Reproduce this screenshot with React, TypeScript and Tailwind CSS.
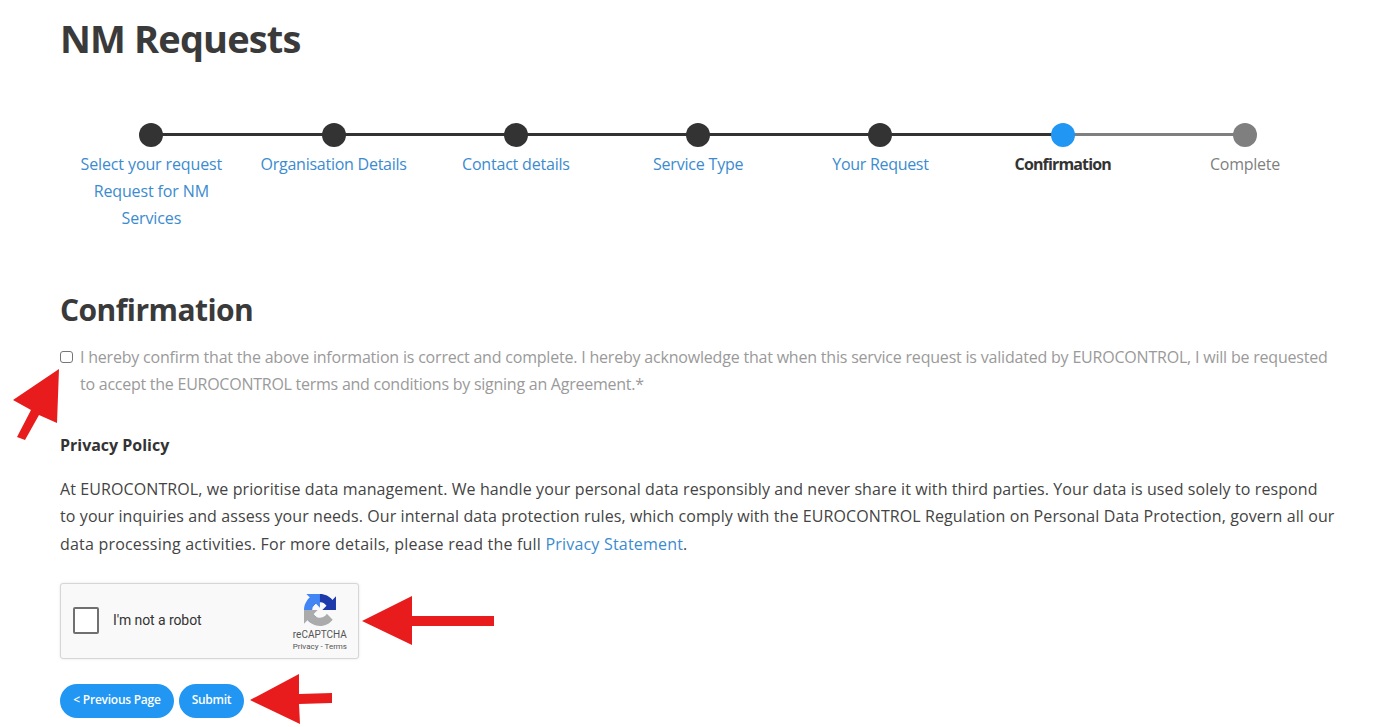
const steps = [
  { lines: ["Select your request", "Request for NM", "Services"], dot: "bg-[#333333]", line: "bg-[#333333]", text: "text-[#3b8bd0] tracking-[-0.12px]" },
  { lines: ["Organisation Details"], dot: "bg-[#333333]", line: "bg-[#333333]", text: "text-[#3b8bd0] tracking-[-0.25px]" },
  { lines: ["Contact details"], dot: "bg-[#333333]", line: "bg-[#333333]", text: "text-[#3b8bd0] tracking-[-0.2px]" },
  { lines: ["Service Type"], dot: "bg-[#333333]", line: "bg-[#333333]", text: "text-[#3b8bd0] tracking-[-0.2px]" },
  { lines: ["Your Request"], dot: "bg-[#333333]", line: "bg-[#333333]", text: "text-[#3b8bd0] tracking-[-0.3px]" },
  { lines: ["Confirmation"], dot: "bg-[#2196f3]", line: "bg-[#7f7f7f]", text: "text-[#333333] font-bold tracking-[-0.85px]" },
  { lines: ["Complete"], dot: "bg-[#7f7f7f]", line: "", text: "text-[#7f7f7f] tracking-[-0.25px]" },
];

function Arrows() {
  return (
    <svg className="absolute left-0 top-0 pointer-events-none" width="520" height="727" fill="#e81c1c">
      <polygon points="59,369 13,400 31,410 17,437 25,440 39,415 57,423" />
      <polygon points="362,621 412,596 412,616 494,616 494,626 412,626 412,645" />
      <polygon points="250,700 299,674 299,694 332,693 332,703 299,704 300,724" />
    </svg>
  );
}

function RecaptchaLogo() {
  const d = "M64 31.955l-.033-1.37V4.687l-7.16 7.16C50.948 4.674 42.033.093 32.05.093c-10.4 0-19.622 4.957-25.446 12.637l11.736 11.86a15.55 15.55 0 0 1 4.747-5.33c2.05-1.598 4.952-2.906 8.963-2.906.484 0 .858.057 1.133.163 4.968.392 9.275 3.134 11.812 7.112l-8.306 8.306c10.523-.04 22.4-.066 27.859.027";
  return (
    <svg width="32" height="32" viewBox="0 0 64 64">
      <path d={d} fill="#1c3aa9" />
      <path d={d} fill="#4285f4" transform="rotate(-90 32 32)" />
      <path d={d} fill="#ababab" transform="rotate(180 32 32)" />
    </svg>
  );
}

export default function App() {
  return (
    <div className="relative h-[727px] w-[1373px] overflow-hidden bg-white font-['Open_Sans',sans-serif] text-[#333333]">
      <div className="pl-[60px] pr-[36.8px]">
        <h1 className="pt-[12px] text-[38px] font-bold leading-[52px] tracking-[-0.85px] text-[#3a3a3a]">NM Requests</h1>

        <div className="ml-[0.2px] mt-[59px] flex">
          {steps.map((s) => (
            <div key={s.lines[0]} className="relative flex-1 text-center">
              {s.line && <div className={`absolute left-1/2 top-[10px] h-[3px] w-full ${s.line}`} />}
              <div className={`relative mx-auto h-6 w-6 rounded-full ${s.dot}`} />
              <div className={`mt-[4px] text-[16px] leading-[27px] ${s.text}`}>
                {s.lines.map((l) => <div key={l}>{l}</div>)}
              </div>
            </div>
          ))}
        </div>

        <h2 className="mt-[57px] text-[30px] font-bold leading-[42px] tracking-[-0.55px] text-[#3a3a3a]">Confirmation</h2>

        <div className="mt-[13px] flex items-start text-[16px] leading-[27px] text-[#9a9a9a]">
          <span className="mr-[7px] mt-[7px] h-[12px] w-[13px] shrink-0 rounded-[3px] border border-[#767676] bg-white" />
          <p className="w-[1256px]">
            <span className="block tracking-[-0.2px]">I hereby confirm that the above information is correct and complete. I hereby acknowledge that when this service request is validated by EUROCONTROL, I will be requested</span>
            <span className="block tracking-[-0.25px]">to accept the EUROCONTROL terms and conditions by signing an Agreement.*</span>
          </p>
        </div>

        <p className="mt-[34px] text-[16px] font-bold leading-[27px] tracking-[-0.02px] text-[#333333]">Privacy Policy</p>

        <p className="mt-[17px] w-[1290px] text-[16px] leading-[27.3px] text-[#444444]">
          <span className="block tracking-[0.1px]">At EUROCONTROL, we prioritise data management. We handle your personal data responsibly and never share it with third parties. Your data is used solely to respond</span>
          <span className="block tracking-[0.095px]">to your inquiries and assess your needs. Our internal data protection rules, which comply with the EUROCONTROL Regulation on Personal Data Protection, govern all our</span>
          <span className="block tracking-[0.2px]">data processing activities. For more details, please read the full <span className="text-[#3b8bd0]">Privacy Statement</span>.</span>
        </p>

        <div className="mt-[25px] flex h-[76px] w-[299px] items-center rounded-[3px] border border-[#d6d6d6] bg-[#f9f9f9] pl-[12px] pr-[11px] shadow-[0_0_3px_rgba(0,0,0,0.1)] font-['Roboto',sans-serif]">
          <span className="h-[27px] w-[26px] rounded-[2px] border-2 border-[#707070] bg-white" />
          <span className="ml-[14px] text-[14px] tracking-[-0.08px] text-[#333333]">I'm not a robot</span>
          <div className="ml-auto flex flex-col items-center pt-[5px]">
            <RecaptchaLogo />
            <span className="mt-[2px] text-[10px] leading-[13px] text-[#555555]">reCAPTCHA</span>
            <span className="text-[8px] leading-[11px] text-[#555555]">Privacy - Terms</span>
          </div>
        </div>

        <div className="mt-[25px] flex gap-[5px]">
          <button className="h-[34px] w-[114px] rounded-full bg-[#2196f3] pb-[2px] text-[12px] font-semibold tracking-[-0.25px] text-white">&lt; Previous Page</button>
          <button className="h-[34px] w-[65px] rounded-full bg-[#2196f3] pb-[2px] text-[12px] font-semibold tracking-[-0.25px] text-white">Submit</button>
        </div>
      </div>
      <Arrows />
    </div>
  );
}
